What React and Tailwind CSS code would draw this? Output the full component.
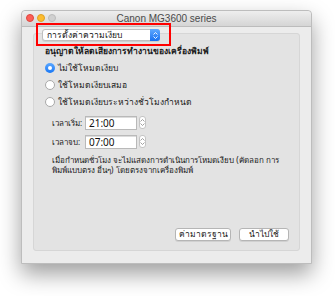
import { useState } from 'react';

const thai = { fontFamily: '"Noto Sans", "Liberation Sans", "DejaVu Sans", sans-serif' };

function Radio({ checked, label }) {
    return (
        <div className="flex items-center h-[17px]">
            <span
                className={
                    checked
                        ? 'w-[10px] h-[10px] rounded-full bg-gradient-to-b from-[#5aa7ff] to-[#1577f5] flex items-center justify-center'
                        : 'w-[10px] h-[10px] rounded-full bg-white border border-[#a9a9a9]'
                }
            >
                {checked && <span className="w-[4px] h-[4px] rounded-full bg-white" />}
            </span>
            <span className="ml-[3px] text-[8.5px] text-[#1a1a1a] leading-none whitespace-nowrap">{label}</span>
        </div>
    );
}

function Stepper() {
    return (
        <div className="w-[7px] h-[13px] rounded-[3px] border border-[#c4c4c4] bg-white flex flex-col items-center justify-center gap-[1px]">
            <svg width="5" height="3" viewBox="0 0 5 3"><path d="M0.5 2.5 L2.5 0.5 L4.5 2.5" fill="none" stroke="#8a8a8a" strokeWidth="0.8" /></svg>
            <svg width="5" height="3" viewBox="0 0 5 3"><path d="M0.5 0.5 L2.5 2.5 L4.5 0.5" fill="none" stroke="#8a8a8a" strokeWidth="0.8" /></svg>
        </div>
    );
}

function TimeRow({ label, value }) {
    return (
        <div className="flex items-center h-[14px]">
            <span className="w-[33px] text-[8px] text-[#1a1a1a] leading-none whitespace-nowrap">{label}</span>
            <div className="w-[52px] h-[14px] bg-white border border-[#b9b9b9] shadow-[inset_0_1px_0_#dcdcdc] flex items-center pl-[3px] text-[10px] text-[#111] leading-none">
                {value}
            </div>
            <div className="ml-[2px]">
                <Stepper />
            </div>
        </div>
    );
}

function Button({ children, className }) {
    return (
        <button className={'h-[11px] box-content py-0 rounded-[3px] bg-white border border-[#b5b5b5] shadow-[0_1px_0_#d0d0d0] text-[8.5px] leading-none text-[#1a1a1a] whitespace-nowrap ' + className}>
            {children}
        </button>
    );
}

export default function App() {
    const [mode] = useState(0);

    return (
        <div className="relative w-[335px] h-[296px] bg-white overflow-hidden pt-[10px] pl-[21px]" style={thai}>
            <div className="w-[291px] h-[254px] bg-[#ececec] border border-[#bdbdbd] rounded-t-[4px] shadow-[0_10px_22px_rgba(0,0,0,0.38)] flex flex-col">
                <div className="relative h-[16px] rounded-t-[4px] bg-gradient-to-b from-[#eeeeee] to-[#d5d5d5] border-b border-[#bcbcbc] flex items-center">
                    <div className="absolute left-[4px] top-[3px] flex gap-[3px]">
                        <span className="w-[8px] h-[8px] rounded-full bg-[#fc5f57] border border-[#e0443e]" />
                        <span className="w-[8px] h-[8px] rounded-full bg-[#fdbc2e] border border-[#dea123]" />
                        <span className="w-[8px] h-[8px] rounded-full bg-[#d0d0d0] border border-[#bcbcbc]" />
                    </div>
                    <div className="w-full text-center text-[10px] leading-none text-[#4a4a4a]" style={{ fontFamily: '"Liberation Sans", sans-serif' }}>
                        Canon MG3600 series
                    </div>
                </div>

                <div className="px-[11px] pt-[2px]">
                    <div className="relative z-10 ml-[9px] w-[118px] h-[12px] bg-white border border-[#bfbfbf] rounded-[3px] shadow-[0_1px_0_#cfcfcf] flex items-center">
                        <span className="flex-1 pl-[4px] text-[8.5px] leading-none text-[#111] whitespace-nowrap">การตั้งค่าความเงียบ</span>
                        <span className="w-[10px] h-[12px] -my-[1px] -mr-[1px] rounded-r-[3px] bg-gradient-to-b from-[#5fa9ff] to-[#1470f0] flex flex-col items-center justify-center gap-[1px]">
                            <svg width="5" height="3" viewBox="0 0 5 3"><path d="M0.5 2.5 L2.5 0.5 L4.5 2.5" fill="none" stroke="#fff" strokeWidth="0.9" /></svg>
                            <svg width="5" height="3" viewBox="0 0 5 3"><path d="M0.5 0.5 L2.5 2.5 L4.5 0.5" fill="none" stroke="#fff" strokeWidth="0.9" /></svg>
                        </span>
                    </div>

                    <div className="-mt-[8px] h-[218px] bg-[#e3e3e3] border border-[#d6d6d6] rounded-[3px] flex flex-col pl-[11px] pr-[10px] pt-[13px] pb-[9px]">
                        <div className="text-[8.5px] leading-none font-semibold text-[#1a1a1a] whitespace-nowrap">
                            อนุญาตให้ลดเสียงการทำงานของเครื่องพิมพ์
                        </div>

                        <div className="mt-[4px] flex flex-col">
                            <Radio checked={mode === 0} label="ไม่ใช้โหมดเงียบ" />
                            <Radio checked={mode === 1} label="ใช้โหมดเงียบเสมอ" />
                            <Radio checked={mode === 2} label="ใช้โหมดเงียบระหว่างชั่วโมงกำหนด" />
                        </div>

                        <div className="mt-[5px] pl-[7px] flex flex-col gap-[5px]">
                            <TimeRow label="เวลาเริ่ม:" value="21:00" />
                            <TimeRow label="เวลาจบ:" value="07:00" />
                        </div>

                        <p className="mt-[6px] pl-[7px] text-[8px] leading-[10px] text-[#1a1a1a] whitespace-nowrap">
                            เมื่อกำหนดชั่วโมง จะไม่แสดงการดำเนินการโหมดเงียบ (คัดลอก การ
                            <br />
                            พิมพ์แบบตรง อื่นๆ) โดยตรงจากเครื่องพิมพ์
                        </p>

                        <div className="mt-auto flex justify-end gap-[8px]">
                            <Button className="w-[54px]">ค่ามาตรฐาน</Button>
                            <Button className="w-[48px]">นำไปใช้</Button>
                        </div>
                    </div>
                </div>
            </div>

            <div className="absolute left-[36px] top-[23px] w-[135px] h-[23px] border-2 border-[#ff0000]" />
        </div>
    );
}
